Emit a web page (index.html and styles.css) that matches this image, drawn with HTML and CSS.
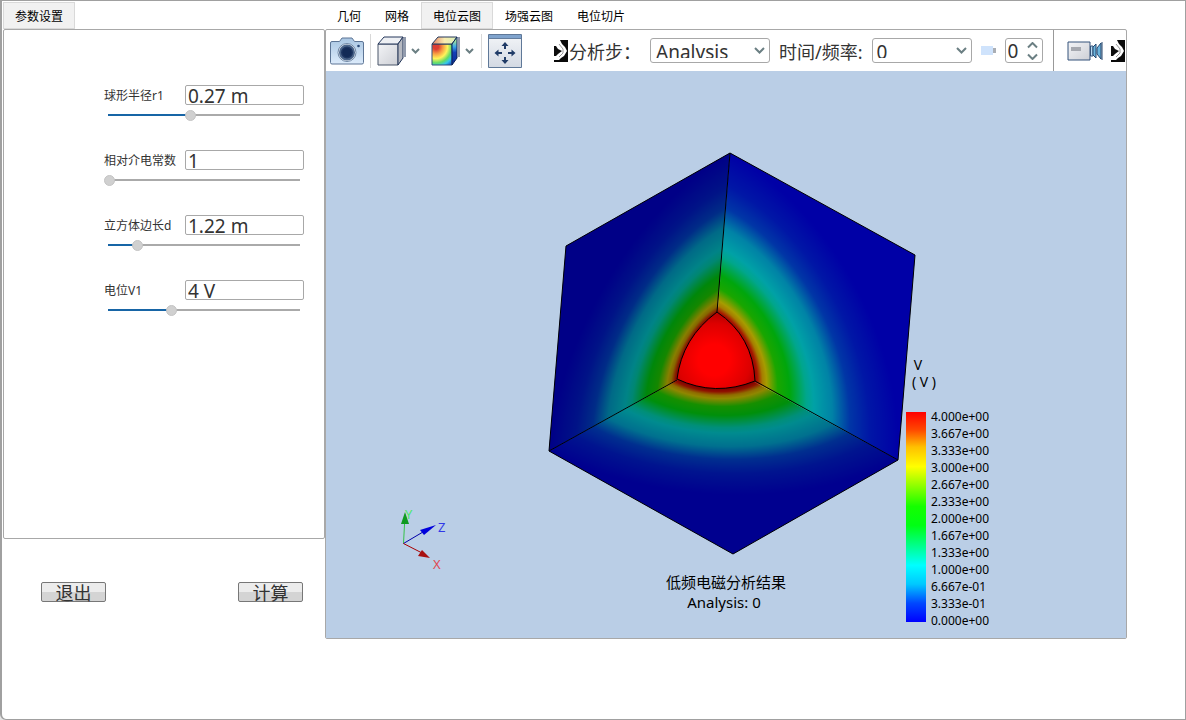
FILE: index.html
```html
<!DOCTYPE html>
<html lang="zh-CN">
<head>
<meta charset="utf-8">
<title>低频电磁分析</title>
<link rel="stylesheet" href="styles.css">
</head>
<body>
<div class="window">
  <aside class="side">
    <div class="tabs" role="tablist"><button class="tab active" role="tab">参数设置</button></div>
    <form class="panel params">
      <div class="param">
        <label for="r1">球形半径r1</label><input id="r1" class="value" type="text" value="0.27 m">
        <input class="slider" type="range" aria-label="球形半径r1" min="0" max="1000" value="426" style="--p:43%">
      </div>
      <div class="param">
        <label for="eps">相对介电常数</label><input id="eps" class="value" type="text" value="1">
        <input class="slider" type="range" aria-label="相对介电常数" min="0" max="1000" value="0" style="--p:0%">
      </div>
      <div class="param">
        <label for="d">立方体边长d</label><input id="d" class="value" type="text" value="1.22 m">
        <input class="slider" type="range" aria-label="立方体边长d" min="0" max="1000" value="150" style="--p:15%">
      </div>
      <div class="param">
        <label for="v1">电位V1</label><input id="v1" class="value" type="text" value="4 V">
        <input class="slider" type="range" aria-label="电位V1" min="0" max="1000" value="328" style="--p:33%">
      </div>
    </form>
    <div class="actions">
      <button class="push">退出</button>
      <button class="push">计算</button>
    </div>
  </aside>

  <main class="main">
    <div class="tabs" role="tablist">
      <button class="tab" role="tab">几何</button>
      <button class="tab" role="tab">网格</button>
      <button class="tab active" role="tab">电位云图</button>
      <button class="tab" role="tab">场强云图</button>
      <button class="tab" role="tab">电位切片</button>
    </div>
    <section class="panel viewer">
      <div class="toolbar">
        <button class="tool" aria-label="截图">
          <svg width="34" height="28" viewBox="0 0 34 28">
            <defs><linearGradient id="cam" x1="0" y1="0" x2="0" y2="1"><stop offset="0" stop-color="#a9c6e2"/><stop offset="1" stop-color="#dcebfb"/></linearGradient></defs>
            <path d="M2 4.500H9.500L12 1H22L24.500 4.500H32Q33.500 4.500 33.500 6V25.500Q33.500 27 32 27H2Q.5 27 .5 25.500V6Q.5 4.500 2 4.500Z" fill="url(#cam)" stroke="#5d7595"/>
            <circle cx="17" cy="15.500" r="9" fill="#f4f8fc" stroke="#6f87a5"/>
            <circle cx="17" cy="15.500" r="7" fill="#1d3560" stroke="#4a6489" stroke-width="2"/>
            <circle cx="17" cy="15.500" r="4.500" fill="#122a56"/>
            <circle cx="28.500" cy="9" r="1.300" fill="#294977"/>
          </svg>
        </button>
        <span class="sep"></span>
        <button class="tool" aria-label="显示模式">
          <svg width="29" height="30" viewBox="0 0 29 30">
            <defs><linearGradient id="gray" x1="0" y1="0" x2="1" y2="1"><stop offset="0" stop-color="#f3f4f7"/><stop offset="1" stop-color="#cdcfd5"/></linearGradient></defs>
            <path d="M1 8H21V29H1Z" fill="url(#gray)" stroke="#4a576b"/>
            <path d="M1 8L7 1H26L21 8Z" fill="#eef0f4" stroke="#24375a"/>
            <path d="M21 8L26 1V22L21 29Z" fill="#b6b9c1" stroke="#24375a"/>
            <path d="M28 1V21" stroke="#24375a"/>
          </svg>
          <svg class="chev" width="9" height="6" viewBox="0 0 9 6"><path d="M1 1L4.500 4.500L8 1"/></svg>
        </button>
        <button class="tool cloud" aria-label="云图模式">
          <svg width="29" height="30" viewBox="0 0 29 30">
            <defs><radialGradient id="rain" cx=".2" cy=".12" r="1.15"><stop offset=".12" stop-color="#dc3d35"/><stop offset=".3" stop-color="#f79c43"/><stop offset=".5" stop-color="#fff35a"/><stop offset=".68" stop-color="#62dc68"/><stop offset=".82" stop-color="#36c8ee"/><stop offset="1" stop-color="#1648c8"/></radialGradient>
            <linearGradient id="rainSide" x1="0" y1="0" x2="0" y2="1"><stop offset=".15" stop-color="#9fe0a0"/><stop offset=".35" stop-color="#3ca8e8"/><stop offset=".55" stop-color="#1440b8"/><stop offset="1" stop-color="#0c2a90"/></linearGradient>
            <linearGradient id="rainTop"><stop offset=".1" stop-color="#e89878"/><stop offset=".5" stop-color="#f8ecb0"/><stop offset="1" stop-color="#d8f0b8"/></linearGradient></defs>
            <path d="M1 8H21V29H1Z" fill="url(#rain)" stroke="#30517b"/>
            <path d="M1 8L7 1H26L21 8Z" fill="url(#rainTop)" stroke="#24375a"/>
            <path d="M21 8L26 1V22L21 29Z" fill="url(#rainSide)" stroke="#0c2358"/>
            <path d="M28 1V21" stroke="#24375a"/>
          </svg>
          <svg class="chev" width="9" height="6" viewBox="0 0 9 6"><path d="M1 1L4.500 4.500L8 1"/></svg>
        </button>
        <span class="sep"></span>
        <button class="tool" aria-label="适合窗口">
          <svg width="34" height="34" viewBox="0 0 34 34">
            <defs><linearGradient id="fit" x1="0" y1="0" x2="0" y2="1"><stop offset="0" stop-color="#f3f5f8"/><stop offset="1" stop-color="#d3d9e3"/></linearGradient></defs>
            <path d="M.5.5H33.500V33.500H.5Z" fill="url(#fit)" stroke="#5f7898"/>
            <path d="M1 1H33V4H1Z" fill="#7fa3cd"/><path d="M1 4.500H33" stroke="#637d9e"/>
            <g fill="#203b67"><path d="M17 8L20.500 12H18V15H16V12H13.500Z"/><path d="M17 30L20.500 26H18V23H16V26H13.500Z"/><path d="M6.500 19L10.500 15.500V18H14V20H10.500V22.500Z"/><path d="M27.500 19L23.500 15.500V18H20V20H23.500V22.500Z"/></g>
          </svg>
        </button>
        <svg class="pixel first" width="14" height="22" viewBox="0 0 14 22">
          <defs><filter id="soft"><feGaussianBlur stdDeviation=".6"/></filter></defs>
          <rect width="14" height="22" fill="#0a0a0a"/><g filter="url(#soft)"><path d="M-2 -2H5L8 4L11 7L13 11L10 16L7 18L5 20H-2Z" fill="#fff"/><path d="M-2 6H2L4 9L8 11L4 14L2 16H-2Z" fill="#111"/><path d="M5 4L9 9V13L5 17" fill="none" stroke="#999"/></g>
        </svg>
        <label for="step">分析步：</label>
        <span class="combo wide"><span class="clip"><select id="step"><option>Analysis</option></select></span><svg class="chev" width="11" height="7" viewBox="0 0 11 7"><path d="M1 1L5.500 5.500L10 1"/></svg></span>
        <label for="time" class="gap">时间/频率:</label>
        <span class="combo"><span class="clip"><select id="time"><option>0</option></select></span><svg class="chev" width="11" height="7" viewBox="0 0 11 7"><path d="M1 1L5.500 5.500L10 1"/></svg></span>
        <svg class="gap" width="15" height="9" viewBox="0 0 15 9"><path d="M0 0H12V9H0Z" fill="#cfe3fc"/><path d="M12 2H15V7H12Z" fill="#aaaeb4"/></svg>
        <span class="combo spin gap"><input type="number" aria-label="帧" value="0"><svg class="chev" width="11" height="18" viewBox="0 0 11 18"><path d="M1 5.500L5.500 1L10 5.500M1 12.500L5.500 17L10 12.500"/></svg></span>
        <span class="rule"></span>
        <button class="tool" aria-label="录像">
          <svg width="36" height="20" viewBox="0 0 36 20">
            <path d="M1 1H23V19H1Z" fill="url(#gray)" stroke="#34527a"/><path d="M4 6H14V10H4Z" fill="#a5a8af"/>
            <path d="M23.500 5H26V15H23.500Z" fill="#b7dcf2" stroke="#34527a"/><path d="M26 6L29 3V17L26 14Z" fill="#6cb4dc" stroke="#24466f"/><path d="M30 7L34 2V18L30 13Z" fill="#6cb4dc" stroke="#24466f"/><path d="M35 1V19" stroke="#24466f"/>
          </svg>
        </button>
        <svg class="pixel last" width="14" height="22" viewBox="0 0 14 22">
          <rect width="14" height="22" fill="#0a0a0a"/><g filter="url(#soft)"><path d="M-2 -2H5L8 4L11 7L13 11L10 16L7 18L5 20H-2Z" fill="#fff"/><path d="M-2 6H2L4 9L8 11L4 14L2 16H-2Z" fill="#111"/><path d="M5 4L9 9V13L5 17" fill="none" stroke="#999"/></g>
        </svg>
      </div>

      <div class="scene">
        <svg viewBox="326 71 800 567" role="img" aria-label="低频电磁分析结果">
          <defs>
            <radialGradient id="field" gradientUnits="userSpaceOnUse" cx="0" cy="0" r="1">
              <stop offset=".215" stop-color="#e80000"/><stop offset=".235" stop-color="#ff2000"/>
              <stop offset=".262" stop-color="#ffc000"/><stop offset=".285" stop-color="#fff000"/>
              <stop offset=".345" stop-color="#28ff00"/><stop offset=".41" stop-color="#00ff14"/>
              <stop offset=".5" stop-color="#00ffd8"/><stop offset=".54" stop-color="#00f8ff"/>
              <stop offset=".64" stop-color="#00c8ff"/><stop offset=".735" stop-color="#0054ff"/>
              <stop offset=".84" stop-color="#0024ff"/><stop offset="1" stop-color="#0000ff"/>
            </radialGradient>
            <radialGradient id="fieldL" href="#field" gradientTransform="matrix(-165 91 16 -207 714 360)"/>
            <radialGradient id="fieldR" href="#field" gradientTransform="matrix(184 100 16 -207 714 360)"/>
            <radialGradient id="fieldB" href="#field" gradientTransform="matrix(-165 91 184 100 714 360)"/>
            <radialGradient id="ball" gradientUnits="userSpaceOnUse" cx="714" cy="360" r="52">
              <stop offset=".3" stop-color="#ff0000"/><stop offset=".7" stop-color="#dd0000"/><stop offset="1" stop-color="#a40000"/>
            </radialGradient>
            <linearGradient id="scale" x1="0" y1="0" x2="0" y2="1">
              <stop offset="0" stop-color="#ff0000"/><stop offset=".0833" stop-color="#ff4600"/>
              <stop offset=".1667" stop-color="#ffc000"/><stop offset=".26" stop-color="#ffff00"/>
              <stop offset=".45" stop-color="#14ff00"/><stop offset=".54" stop-color="#00ff14"/>
              <stop offset=".73" stop-color="#00ffff"/><stop offset=".82" stop-color="#00c8ff"/>
              <stop offset=".91" stop-color="#0048ff"/><stop offset="1" stop-color="#0000ff"/>
            </linearGradient>
          </defs>
          <path d="M714 360L730 153L566 246L549 451Z" fill="url(#fieldL)"/>
          <path d="M714 360L730 153L566 246L549 451Z" fill-opacity=".47"/>
          <path d="M714 360L730 153L915 255L898 460Z" fill="url(#fieldR)"/>
          <path d="M714 360L730 153L915 255L898 460Z" fill-opacity=".35"/>
          <path d="M714 360L549 451L733 554L898 460Z" fill="url(#fieldB)"/>
          <path d="M714 360L549 451L733 554L898 460Z" fill-opacity=".44"/>
          <path d="M717 312Q753 336 755 381Q715 397 677 379Q682 338 717 312Z" fill="url(#ball)"/>
          <path class="edge" d="M730 153L566 246L549 451L733 554L898 460L915 255ZL717 312Q753 336 755 381Q715 397 677 379Q682 338 717 312M677 380L549 451M755 381L898 460"/>

          <g class="axis">
            <path d="M403.500 543.500L405 515" stroke="#35c24a"/><path d="M405 512L409 524H401Z" fill="#0f9a20"/>
            <path d="M403.500 543.500L428 529" stroke="#0000a8"/><path d="M436 525L424 535L420 530Z" fill="#0000dc"/>
            <path d="M403.500 543.500L424 554" stroke="#a80000"/><path d="M430 558L418 556L422 550Z" fill="#a81010"/>
            <text x="405" y="519" fill="#4be868">Y</text><text x="438" y="532" fill="#3038e8">Z</text><text x="433" y="569" fill="#e04850">X</text>
          </g>

          <text class="caption" x="726" y="588">低频电磁分析结果</text>
          <text class="caption" x="724" y="608">Analysis: 0</text>

          <text class="unit" x="918" y="370">V</text>
          <text class="unit" x="924" y="387">( V )</text>
          <rect x="906" y="412" width="20" height="210" fill="url(#scale)"/>
          <g class="ticks">
            <text x="931" y="421">4.000e+00</text><text x="931" y="438">3.667e+00</text>
            <text x="931" y="455">3.333e+00</text><text x="931" y="472">3.000e+00</text>
            <text x="931" y="489">2.667e+00</text><text x="931" y="506">2.333e+00</text>
            <text x="931" y="523">2.000e+00</text><text x="931" y="540">1.667e+00</text>
            <text x="931" y="557">1.333e+00</text><text x="931" y="574">1.000e+00</text>
            <text x="931" y="591">6.667e-01</text><text x="931" y="608">3.333e-01</text>
            <text x="931" y="625">0.000e+00</text>
          </g>
        </svg>
      </div>
    </section>
  </main>
</div>
</body>
</html>
```
FILE: styles.css
```css
* { box-sizing: border-box; }

body {
  margin: 0;
  background: #e4e4e4;
  color: #000;
  font-family: "Noto Sans", "Noto Sans CJK SC", sans-serif;
  font-size: 12px;
}

button, input, select { font: inherit; color: inherit; margin: 0; }

.window {
  display: grid;
  grid-template-columns: 322px minmax(0, 1fr);
  min-height: 100vh;
  padding: 1px 58px 80px 1px;
  background: #fff;
  border: 1px solid #a0a0a0;
  border-left-width: 2px;
  border-radius: 0 0 0 6px;
}

.side, .main { display: flex; flex-direction: column; min-width: 0; }

.tabs { display: flex; height: 27px; }

.tab {
  padding: 2px 11px 0;
  border: 1px solid transparent;
  background: none;
  line-height: 23px;
}

.tab.active { background: #f1f1f1; border-color: #d9d9d9; }

.panel { border: 1px solid #a8a8a8; border-radius: 2px; flex: 1; }

.params {
  display: flex;
  flex-direction: column;
  gap: 29px;
  padding: 55px 20px 0 100px;
  color: #333;
}

.param {
  display: grid;
  grid-template-columns: 81px minmax(0, 1fr);
  grid-template-rows: 20px 12px;
  row-gap: 4px;
  align-items: center;
}

.value {
  width: 100%;
  height: 20px;
  padding: 2px 2px 0;
  border: 1px solid #a8a8a8;
  border-radius: 2px;
  background: #fff;
  font-size: 19px;
}

.slider {
  grid-column: 1 / -1;
  width: 100%;
  height: 12px;
  appearance: none;
  background: linear-gradient(to right, #1765a6 var(--p), #aaa var(--p)) center / calc(100% - 8px) 2px no-repeat;
}

.slider::-webkit-slider-thumb {
  appearance: none;
  width: 11px;
  height: 11px;
  border: 1px solid #c4c4c4;
  border-radius: 50%;
  background: #d0d0d0;
}

.actions {
  display: flex;
  justify-content: space-between;
  height: 100px;
  padding: 43px 22px 0 38px;
}

.push {
  width: 65px;
  height: 20px;
  padding: 1px 0 0;
  border: 1px solid #777;
  border-radius: 2px;
  background: linear-gradient(#ececec 50%, #d4d4d4 50%);
  color: #333;
  font-size: 18px;
  line-height: 18px;
}

.viewer { display: flex; flex-direction: column; }

.toolbar {
  display: flex;
  align-items: center;
  height: 41px;
  padding-left: 4px;
  overflow: hidden;
  color: #333;
  font-size: 18px;
  white-space: nowrap;
}

.toolbar > * { flex: none; }

.tool {
  display: flex;
  align-items: center;
  gap: 5px;
  padding: 0;
  border: 0;
  background: none;
}

.cloud { margin-left: 11px; }

.sep { width: 1px; height: 34px; margin: 0 6px; background: #d8d8d8; }

.cloud + .sep { margin: 0 6px 0 7px; }

.chev { fill: none; stroke: #6b7f83; stroke-width: 2; }

.pixel.first { margin-left: 32px; }
.pixel.last { margin-left: 8px; }

.pixel + label { margin-left: 1px; }

.gap { margin-left: 9px; }

.combo {
  display: flex;
  align-items: center;
  width: 100px;
  height: 25px;
  margin-left: 9px;
  padding: 0 4px;
  border: 1px solid #a8a8a8;
  border-radius: 3px;
  font-size: 19px;
}

.combo.wide { width: 120px; padding-left: 5px; }

.clip {
  flex: 1;
  align-self: flex-start;
  height: 19px;
  overflow: hidden;
}

.combo select {
  display: block;
  width: 100%;
  height: 19px;
  padding: 0;
  border: 0;
  appearance: none;
  background: none;
}

.spin { width: 38px; padding: 0 4px 0 2px; }

.spin input {
  flex: 1;
  width: 12px;
  min-width: 0;
  height: 23px;
  padding: 0;
  border: 0;
  appearance: textfield;
}

.spin input::-webkit-inner-spin-button { appearance: none; }

.rule { width: 1px; height: 100%; margin: 0 13px 0 10px; background: #999; }

.scene { flex: 1; display: flex; background: #bacee6; }

.scene svg { display: block; width: 100%; }

.edge { fill: none; stroke: #000; }

.axis text { font-size: 13px; stroke: none; }

.caption { font-size: 15px; text-anchor: middle; }

.unit { font-size: 14px; text-anchor: middle; }

.ticks { font-size: 12px; }
```
